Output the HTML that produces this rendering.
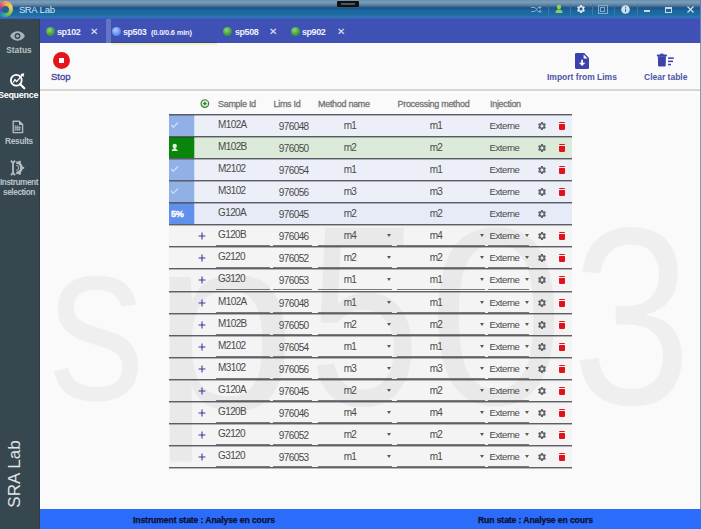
<!DOCTYPE html>
<html><head><meta charset="utf-8">
<style>
*{margin:0;padding:0;box-sizing:border-box}
html,body{width:701px;height:529px;overflow:hidden;background:#fafafa;font-family:"Liberation Sans",sans-serif;position:relative}
.abs{position:absolute}
#title{left:0;top:0;width:701px;height:19px;background:linear-gradient(to bottom,#6a8fae 0px,#7a9fbd 2px,#5f82a0 5px,#3d6a90 6.5px,#1c5284 8px,#1a64a0 10px,#1e6ea2 15px,#2a78bb 17px,#3a5fb5 18.5px,#3f51b5 19px)}
#side{left:0;top:19px;width:40px;height:510px;background:#37474f}
#tabs{left:40px;top:19px;width:661px;height:24px;background:#3f51b5}
#content{left:40px;top:43px;width:661px;height:466px;background:#fafafa;border-right:1px solid #7d9fae}
#statusbar{left:40px;top:509px;width:661px;height:20px;background:#2c6cfb}
.tab{position:absolute;color:#fff;font-weight:bold;white-space:nowrap}
.dot{position:absolute;width:9px;height:9px;border-radius:50%;top:27px}
.g{background:radial-gradient(circle at 40% 35%,#8ed77c 0,#4aa53f 50%,#2d7a2a 100%)}
.b{background:radial-gradient(circle at 40% 35%,#b5cdfb 0,#6c98ee 50%,#4a74d6 100%)}
.tt{position:absolute;top:27.3px;font-size:9px;line-height:10px;font-weight:bold;color:#eef0fb;white-space:nowrap;letter-spacing:-0.45px}
.x{position:absolute;top:26px;font-size:10px;line-height:12px;color:#e8eaf6}
.nav{position:absolute;left:0;width:40px;text-align:center;color:#bac4c8;font-weight:bold;font-size:8.3px;line-height:9px;white-space:nowrap}
.tool{position:absolute;color:#4a56a6;font-weight:bold;font-size:8.5px;line-height:10px;white-space:nowrap}
.wm{position:absolute;font-size:250px;line-height:250px;color:#efefef;white-space:nowrap;transform-origin:0 0;-webkit-text-stroke:1px #fafafa}
#table{position:absolute;left:170px;top:0;width:402px;height:529px}
.hd{position:absolute;top:99px;font-size:9px;line-height:10px;color:#757575;white-space:nowrap;letter-spacing:-0.3px;-webkit-text-stroke:0.3px #757575}
.row{position:absolute;left:-1px;width:403px;height:22px;border-top:1px solid rgba(30,30,38,.7);background:rgba(0,0,0,.025)}
.row>*{margin-left:1px;margin-top:1px}
.row::after{content:"";position:absolute;left:0;top:0;width:403px;height:1px;background:rgba(30,30,38,.3)}

.row.done{background:#eceff7}
.row.cur{background:#e6ebf7}
.row.green{background:#dcead9}
.row.last{height:24px;border-bottom:2px solid rgba(40,40,40,.72)}
.row>.st{position:absolute;left:0;top:0;width:26px;height:21px;margin-left:0;margin-top:0;border-right:1px solid rgba(255,255,255,.6)}
.st>svg{top:1px !important}
.stc{background:#91b0e6}
.stg{background:#0a850c}
.stp{background:#6090ec;color:#fff;font-weight:bold;font-size:9px;line-height:20px;padding-top:0.5px;padding-left:2px;letter-spacing:-0.3px;-webkit-text-stroke:0.35px #fff}
.plus{position:absolute;left:28.2px;top:5.9px}
.t{position:absolute;font-size:10px;line-height:10px;color:#4a4a4a;white-space:nowrap;letter-spacing:-0.6px}
.sid{left:48px;top:4px}
.lims{left:108.8px;top:6px}
.meth{left:160px;width:40px;text-align:center;top:5.2px}
.proc{left:246px;width:40px;text-align:center;top:5.2px}
.inj{left:319.5px;top:5.4px;font-size:9.6px;letter-spacing:-0.45px}
.ul{position:absolute;top:19px;height:1px;background:#7a7a7a}
.arr{position:absolute;top:8px;width:0;height:0;border-left:2.7px solid transparent;border-right:2.7px solid transparent;border-top:3px solid #5a5a5a}
.gear{position:absolute;left:366.5px;top:4.8px}
.trash{position:absolute;left:388.8px;top:7.5px;width:5.8px;height:6.5px;background:#e0131a;border-radius:0.5px 0.5px 1.2px 1.2px}
.trash i{position:absolute;left:-0.2px;top:-1.6px;width:6.2px;height:1.3px;background:#e0131a;border-radius:1px 1px 0 0}
.sb{position:absolute;top:515px;font-size:8.6px;line-height:10px;font-weight:bold;color:#081030;white-space:nowrap;letter-spacing:-0.1px;-webkit-text-stroke:0.25px #081030}
.ticon{position:absolute}
</style></head><body>
<div id="title" class="abs"></div>
<!-- logo -->
<div class="abs" style="left:-3px;top:1px;width:16px;height:16px;border-radius:50%;background:conic-gradient(from 0deg,#f0a050 0deg,#f2d060 70deg,#8cc840 130deg,#30a0a0 200deg,#3060c0 250deg,#d04080 300deg,#f0a050 360deg)"></div>
<div class="abs" style="left:1.5px;top:5.5px;width:7px;height:7px;border-radius:50%;background:#2a5f95"></div>
<div class="abs" style="left:19px;top:3.6px;font-size:9.5px;line-height:12px;color:#cfe4f6;letter-spacing:-0.5px">SRA</div><div class="abs" style="left:39.5px;top:3.6px;font-size:9.5px;line-height:12px;color:#cfe4f6;letter-spacing:-0.1px">Lab</div>
<div class="abs" style="left:337px;top:1px;width:22px;height:6px;background:#111;border-radius:1px"></div>
<div class="abs" style="left:341px;top:3px;width:14px;height:2px;background:#555"></div>
<!-- title icons -->
<svg class="ticon" style="left:531px;top:5px" width="11" height="9" viewBox="0 0 11 9"><path d="M0 2.5h4l3 4h3M0 6.5h4l3-4h3M8.5 1l1.5 1.5-1.5 1.5M8.5 5l1.5 1.5-1.5 1.5" stroke="#88a9c8" stroke-width="1" fill="none"/></svg>
<div class="abs" style="left:548px;top:4px;width:1px;height:11px;background:#3f77a8"></div>
<svg class="ticon" style="left:555px;top:4px" width="8" height="10" viewBox="0 0 8 10"><circle cx="4" cy="3" r="2.2" fill="#8fd14f"/><path d="M0.5 9c0-2.5 1.5-3.5 3.5-3.5S7.5 6.5 7.5 9z" fill="#8fd14f"/></svg>
<div class="abs" style="left:570px;top:4px;width:1px;height:11px;background:#3f77a8"></div>
<svg class="ticon" style="left:576px;top:4px" width="10" height="10" viewBox="0 0 24 24"><path fill="#dde8f3" d="M19.14 12.94c.04-.3.06-.61.06-.94 0-.32-.02-.64-.07-.94l2.03-1.58a.49.49 0 0 0 .12-.61l-1.92-3.32a.488.488 0 0 0-.59-.22l-2.39.96c-.5-.38-1.030-.7-1.62-.94l-.36-2.54a.484.484 0 0 0-.48-.41h-3.84c-.24 0-.43.17-.47.41l-.36 2.54c-.59.24-1.13.57-1.62.94l-2.39-.96a.48.48 0 0 0-.59.22L2.74 8.87c-.12.21-.8.47.12.61l2.03 1.58c-.05.3-.09.63-.09.94s.02.64.07.94l-2.03 1.58a.49.49 0 0 0-.12.61l1.920 3.32c.12.22.37.29.59.22l2.39-.96c.5.38 1.03.7 1.62.94l.36 2.54c.05.24.24.41.48.41h3.84c.24 0 .44-.17.47-.41l.36-2.540c.59-.24 1.13-.56 1.62-.94l2.39.96c.22.08.47 0 .59-.22l1.92-3.32c.12-.22.07-.47-.12-.61l-2.01-1.58zM12 15.6c-1.98 0-3.6-1.62-3.6-3.6s1.62-3.6 3.6-3.6 3.6 1.62 3.6 3.6-1.62 3.6-3.6 3.6z"/></svg>
<div class="abs" style="left:592px;top:4px;width:1px;height:11px;background:#3f77a8"></div>
<svg class="ticon" style="left:598px;top:5px" width="10" height="9" viewBox="0 0 10 9"><rect x="0.5" y="0.5" width="9" height="8" stroke="#88a9c8" fill="none"/><rect x="2.5" y="2.5" width="4" height="4" stroke="#88a9c8" fill="none"/></svg>
<div class="abs" style="left:614px;top:4px;width:1px;height:11px;background:#3f77a8"></div>
<svg class="ticon" style="left:621px;top:5px" width="9" height="9" viewBox="0 0 9 9"><circle cx="4.5" cy="4.5" r="4.3" fill="#cfe0f0"/><rect x="4" y="3.6" width="1.1" height="3.4" fill="#3b76ad"/><rect x="4" y="1.8" width="1.1" height="1.1" fill="#3b76ad"/></svg>
<div class="abs" style="left:637px;top:4px;width:1px;height:11px;background:#3f77a8"></div>
<div class="abs" style="left:643.5px;top:10.3px;width:6.5px;height:2px;background:#c5d9ec"></div>
<div class="abs" style="left:665px;top:6.5px;width:7px;height:6px;border:1px solid #c5d9ec;border-top-width:2px"></div>
<svg class="ticon" style="left:687px;top:6px" width="7" height="7" viewBox="0 0 7 7"><path d="M0.5 0.5L6.5 6.5M6.5 0.5L0.5 6.5" stroke="#cfe0f0" stroke-width="1.2"/></svg>

<div id="side" class="abs"></div>
<!-- sidebar -->
<svg class="abs" style="left:10px;top:31px" width="15" height="10" viewBox="0 0 15 10"><path d="M7.5 0.3C4 0.3 1.2 2.5 0.2 5c1 2.5 3.8 4.7 7.3 4.7s6.3-2.2 7.3-4.7C13.8 2.5 11 0.3 7.5 0.3z" fill="#a9b3b8"/><circle cx="7.5" cy="5" r="2.9" fill="#37474f"/><circle cx="7.5" cy="5" r="1.5" fill="#a9b3b8"/></svg>
<div class="nav" style="top:46px;left:-1px">Status</div>
<svg class="abs" style="left:8px;top:72px" width="18" height="18" viewBox="0 0 18 18"><circle cx="8.3" cy="8.3" r="5.4" stroke="#fff" stroke-width="1.8" fill="none"/><path d="M12.2 12.2L16.3 16.3" stroke="#fff" stroke-width="2.2" stroke-linecap="round"/><path d="M5.2 10.5L7 7.6 8.6 9.6 14.3 3" stroke="#fff" stroke-width="1.3" fill="none"/><path d="M16.3 1.2L12.4 2.1 15.5 5z" fill="#fff"/></svg>
<div class="nav" style="top:91px;color:#fff;font-size:9px;letter-spacing:-0.3px;left:-2px">Sequence</div>
<svg class="abs" style="left:12px;top:120px" width="12" height="14" viewBox="0 0 12 14"><path d="M1.2 1.2H7.2L10.6 4.6V12.6H1.2Z" stroke="#aebac0" stroke-width="1.4" fill="none" stroke-linejoin="round"/><path d="M7 1L10.8 4.8H7Z" fill="#c3cdd2"/><path d="M3.2 5.2V11M5.2 5.2V11M7.2 6V11M3.2 7.3H8.8M3.2 9.2H8.8" stroke="#aebac0" stroke-width="0.9"/></svg>
<div class="nav" style="top:137px;left:-1px;letter-spacing:-0.3px">Results</div>
<svg class="abs" style="left:10px;top:160px" width="15" height="16" viewBox="0 0 15 16"><path d="M1 0.6L3 3.2V12.6L1 15.2M5 0.6L3 3.2M3 12.6L5 15.2" stroke="#b4bfc4" stroke-width="1.8" fill="none"/><path d="M6.3 2.6A5.2 5.2 0 0 1 6.3 13" stroke="#b4bfc4" stroke-width="2.6" fill="none"/><path d="M6.3 5.4A2.4 2.4 0 0 1 6.3 10.2" stroke="#b4bfc4" stroke-width="1" fill="none"/><rect x="11.6" y="6.8" width="2.6" height="2" fill="#b4bfc4"/><rect x="8.6" y="0.9" width="2.2" height="2.4" fill="#b4bfc4" transform="rotate(30 9.7 2.1)"/><rect x="8.6" y="12.3" width="2.2" height="2.4" fill="#b4bfc4" transform="rotate(-30 9.7 13.5)"/></svg>
<div class="nav" style="top:178px;letter-spacing:-0.5px;left:-1px">Instrument</div>
<div class="nav" style="top:188px;letter-spacing:-0.45px;left:-1px">selection</div>
<div class="abs" style="left:-21px;top:465px;width:72px;height:18px;transform:rotate(-90deg);font-size:17px;line-height:18px;color:#e2e6e8;text-align:center;white-space:nowrap;letter-spacing:0.05px">SRA Lab</div>

<div id="tabs" class="abs"></div>
<div class="abs" style="left:700px;top:0px;width:1px;height:43px;background:#4f86c9"></div>
<div class="abs" style="left:38.5px;top:19px;width:1.5px;height:510px;background:#2d3b42"></div>
<!-- tabs -->
<div class="dot g" style="left:45.5px"></div>
<div class="tt" style="left:57px">sp102</div>
<div class="x" style="left:90px">&#x2715;</div>
<div class="abs" style="left:106px;top:19px;width:5px;height:24px;background:#6674c6"></div>
<div class="dot b" style="left:112px"></div>
<div class="tt" style="left:123px">sp503</div>
<div class="tt" style="left:151px;top:29px;font-size:7.5px;line-height:8px;letter-spacing:-0.2px">(0.0/0.6 min)</div>
<div class="dot g" style="left:223px"></div>
<div class="tt" style="left:235px">sp508</div>
<div class="x" style="left:269px">&#x2715;</div>
<div class="dot g" style="left:290.5px"></div>
<div class="tt" style="left:302px">sp902</div>
<div class="x" style="left:337px">&#x2715;</div>

<div id="content" class="abs"></div>
<div class="abs" style="left:111px;top:41.5px;width:106px;height:1.5px;background:#33418f"></div>
<div class="abs" style="left:111px;top:43px;width:106px;height:2px;background:#eef4c6"></div>
<div class="wm" style="left:48.1px;top:204.3px;transform:scale(0.78,0.93)">s</div>
<div class="wm" style="left:152px;top:196.9px;transform:scale(1.04,1.008)">p</div>
<div class="wm" style="left:307.9px;top:186.7px;transform:scale(0.81,1.034)">5</div>
<div class="wm" style="left:428.2px;top:190.4px;transform:scale(0.98,1.017)">0</div>
<div class="wm" style="left:571.3px;top:190.4px;transform:scale(0.87,1.017)">3</div>
<!-- toolbar -->
<div class="abs" style="left:53px;top:52px;width:17px;height:17px;border-radius:50%;background:#e4141b"></div>
<div class="abs" style="left:59px;top:58px;width:5px;height:5px;background:#fff;border-radius:0.5px"></div>
<div class="tool" style="left:51px;top:72px;font-weight:normal;font-size:9.5px;color:#433f9c;-webkit-text-stroke:0.3px #433f9c">Stop</div>
<svg class="abs" style="left:575px;top:53px" width="14" height="16" viewBox="0 0 14 16"><path d="M1.3 0h7.9l4.8 4.9v9.8a1.3 1.3 0 0 1-1.3 1.3H1.3A1.3 1.3 0 0 1 0 14.7V1.3A1.3 1.3 0 0 1 1.3 0z" fill="#3b43aa"/><path d="M8.6 1.6V5.6H12.6z" fill="#fff"/><path d="M6.2 6.8h1.8v3h2.3L7.1 13 3.9 9.8h2.3z" fill="#fff"/></svg>
<div class="tool" style="left:547px;top:72px">Import from Lims</div>
<svg class="abs" style="left:656px;top:53px" width="19" height="15" viewBox="0 0 19 15"><rect x="0.8" y="1.4" width="10.2" height="2" rx="1" fill="#3b43aa"/><rect x="4.4" y="0.6" width="3" height="1.4" fill="#3b43aa"/><path d="M1.9 3.2H9.9L9.7 12.8Q9.6 13.6 8.8 13.6H3Q2.2 13.6 2.1 12.8Z" fill="#3b43aa"/><rect x="12" y="4.4" width="5.8" height="1.5" fill="#3b43aa"/><rect x="12" y="7.6" width="5" height="1.5" fill="#3b43aa"/><rect x="12" y="10.8" width="3" height="1.5" fill="#3b43aa"/></svg>
<div class="tool" style="left:644px;top:72px">Clear table</div>
<div class="abs" style="left:40px;top:89px;width:660px;height:2px;background:#d6d6d6"></div><div class="abs" style="left:40px;top:91.5px;width:660px;height:1px;background:#fff"></div>

<div id="table">
<svg class="abs" style="left:30px;top:98.5px" width="10" height="10" viewBox="0 0 10 10"><circle cx="4.85" cy="4.55" r="3.8" stroke="#3d7f3f" stroke-width="1.2" fill="#d4f2d2"/><path d="M4.85 2.8v3.5M3.1 4.55h3.5" stroke="#2f7a33" stroke-width="1.3"/></svg>
<div class="hd" style="left:48px">Sample Id</div>
<div class="hd" style="left:103.5px">Lims Id</div>
<div class="hd" style="left:148px">Method name</div>
<div class="hd" style="left:227.5px">Processing method</div>
<div class="hd" style="left:320px">Injection</div>
<div class="row done" style="top:114px"><div class="st stc"><svg width="12" height="14" viewBox="0 0 12 14" style="position:absolute;left:0;top:0"><path d="M2.2 9 L4.3 11.4 L8.9 6.5" stroke="rgba(255,255,255,.6)" stroke-width="1.2" fill="none"/></svg></div><div class="t sid">M102A</div><div class="t lims">976048</div><div class="t meth">m1</div><div class="t proc">m1</div><div class="t inj">Externe</div><svg class="gear" width="10" height="10" viewBox="0 0 24 24"><path fill="#5f6368" d="M19.14 12.94c.04-.3.06-.61.06-.94 0-.32-.02-.64-.07-.94l2.03-1.58a.49.49 0 0 0 .12-.61l-1.92-3.32a.488.488 0 0 0-.59-.22l-2.39.96c-.5-.38-1.03-.7-1.62-.94l-.36-2.54a.484.484 0 0 0-.48-.41h-3.84c-.24 0-.43.17-.47.41l-.36 2.54c-.59.24-1.13.57-1.62.94l-2.39-.96a.48.48 0 0 0-.59.22L2.74 8.87c-.12.21-.8.47.12.61l2.03 1.58c-.05.3-.09.63-.09.94s.02.64.07.94l-2.03 1.58a.49.49 0 0 0-.12.61l1.92 3.32c.12.22.37.29.59.22l2.39-.96c.5.38 1.03.7 1.62.94l.36 2.54c.05.24.24.41.48.41h3.84c.24 0 .44-.17.47-.41l.36-2.54c.59-.24 1.13-.56 1.62-.94l2.39.96c.22.08.47 0 .59-.22l1.92-3.32c.12-.22.07-.47-.12-.61l-2.01-1.58zM12 15.6c-1.98 0-3.6-1.62-3.6-3.6s1.62-3.6 3.6-3.6 3.6 1.62 3.6 3.6-1.62 3.6-3.6 3.6z"/></svg><div class="trash"><i></i></div></div>
<div class="row green" style="top:136px"><div class="st stg"><svg width="12" height="16" viewBox="0 0 12 16" style="position:absolute;left:0;top:0"><circle cx="5.7" cy="7.9" r="2.2" fill="#d8f3d8"/><path d="M4.9 9.5h1.6l0.6 2h-2.8z M2.6 13 L3.4 11.3 H8 L8.8 13 Z" fill="#d8f3d8"/></svg></div><div class="t sid">M102B</div><div class="t lims">976050</div><div class="t meth">m2</div><div class="t proc">m2</div><div class="t inj">Externe</div><svg class="gear" width="10" height="10" viewBox="0 0 24 24"><path fill="#5f6368" d="M19.14 12.94c.04-.3.06-.61.06-.94 0-.32-.02-.64-.07-.94l2.03-1.58a.49.49 0 0 0 .12-.61l-1.92-3.32a.488.488 0 0 0-.59-.22l-2.39.96c-.5-.38-1.03-.7-1.62-.94l-.36-2.54a.484.484 0 0 0-.48-.41h-3.84c-.24 0-.43.17-.47.41l-.36 2.54c-.59.24-1.13.57-1.62.94l-2.39-.96a.48.48 0 0 0-.59.22L2.74 8.87c-.12.21-.8.47.12.61l2.03 1.58c-.05.3-.09.63-.09.94s.02.64.07.94l-2.03 1.58a.49.49 0 0 0-.12.61l1.92 3.32c.12.22.37.29.59.22l2.39-.96c.5.38 1.03.7 1.62.94l.36 2.54c.05.24.24.41.48.41h3.84c.24 0 .44-.17.47-.41l.36-2.54c.59-.24 1.13-.56 1.62-.94l2.39.96c.22.08.47 0 .59-.22l1.92-3.32c.12-.22.07-.47-.12-.61l-2.01-1.58zM12 15.6c-1.98 0-3.6-1.62-3.6-3.6s1.62-3.6 3.6-3.6 3.6 1.62 3.6 3.6-1.62 3.6-3.6 3.6z"/></svg><div class="trash"><i></i></div></div>
<div class="row done" style="top:158px"><div class="st stc"><svg width="12" height="14" viewBox="0 0 12 14" style="position:absolute;left:0;top:0"><path d="M2.2 9 L4.3 11.4 L8.9 6.5" stroke="rgba(255,255,255,.6)" stroke-width="1.2" fill="none"/></svg></div><div class="t sid">M2102</div><div class="t lims">976054</div><div class="t meth">m1</div><div class="t proc">m1</div><div class="t inj">Externe</div><svg class="gear" width="10" height="10" viewBox="0 0 24 24"><path fill="#5f6368" d="M19.14 12.94c.04-.3.06-.61.06-.94 0-.32-.02-.64-.07-.94l2.03-1.58a.49.49 0 0 0 .12-.61l-1.92-3.32a.488.488 0 0 0-.59-.22l-2.39.96c-.5-.38-1.03-.7-1.62-.94l-.36-2.54a.484.484 0 0 0-.48-.41h-3.84c-.24 0-.43.17-.47.41l-.36 2.54c-.59.24-1.13.57-1.62.94l-2.39-.96a.48.48 0 0 0-.59.22L2.74 8.87c-.12.21-.8.47.12.61l2.03 1.58c-.05.3-.09.63-.09.94s.02.64.07.94l-2.03 1.58a.49.49 0 0 0-.12.61l1.92 3.32c.12.22.37.29.59.22l2.39-.96c.5.38 1.03.7 1.62.94l.36 2.54c.05.24.24.41.48.41h3.84c.24 0 .44-.17.47-.41l.36-2.54c.59-.24 1.13-.56 1.62-.94l2.39.96c.22.08.47 0 .59-.22l1.92-3.32c.12-.22.07-.47-.12-.61l-2.01-1.58zM12 15.6c-1.98 0-3.6-1.62-3.6-3.6s1.62-3.6 3.6-3.6 3.6 1.62 3.6 3.6-1.62 3.6-3.6 3.6z"/></svg><div class="trash"><i></i></div></div>
<div class="row done" style="top:180px"><div class="st stc"><svg width="12" height="14" viewBox="0 0 12 14" style="position:absolute;left:0;top:0"><path d="M2.2 9 L4.3 11.4 L8.9 6.5" stroke="rgba(255,255,255,.6)" stroke-width="1.2" fill="none"/></svg></div><div class="t sid">M3102</div><div class="t lims">976056</div><div class="t meth">m3</div><div class="t proc">m3</div><div class="t inj">Externe</div><svg class="gear" width="10" height="10" viewBox="0 0 24 24"><path fill="#5f6368" d="M19.14 12.94c.04-.3.06-.61.06-.94 0-.32-.02-.64-.07-.94l2.03-1.58a.49.49 0 0 0 .12-.61l-1.92-3.32a.488.488 0 0 0-.59-.22l-2.39.96c-.5-.38-1.03-.7-1.62-.94l-.36-2.54a.484.484 0 0 0-.48-.41h-3.84c-.24 0-.43.17-.47.41l-.36 2.54c-.59.24-1.13.57-1.62.94l-2.39-.96a.48.48 0 0 0-.59.22L2.74 8.87c-.12.21-.8.47.12.61l2.03 1.58c-.05.3-.09.63-.09.94s.02.64.07.94l-2.03 1.58a.49.49 0 0 0-.12.61l1.92 3.32c.12.22.37.29.59.22l2.39-.96c.5.38 1.03.7 1.62.94l.36 2.54c.05.24.24.41.48.41h3.84c.24 0 .44-.17.47-.41l.36-2.54c.59-.24 1.13-.56 1.62-.94l2.39.96c.22.08.47 0 .59-.22l1.92-3.32c.12-.22.07-.47-.12-.61l-2.01-1.58zM12 15.6c-1.98 0-3.6-1.62-3.6-3.6s1.62-3.6 3.6-3.6 3.6 1.62 3.6 3.6-1.62 3.6-3.6 3.6z"/></svg><div class="trash"><i></i></div></div>
<div class="row cur" style="top:202px"><div class="st stp">5%</div><div class="t sid">G120A</div><div class="t lims">976045</div><div class="t meth">m2</div><div class="t proc">m2</div><div class="t inj">Externe</div><svg class="gear" width="10" height="10" viewBox="0 0 24 24"><path fill="#5f6368" d="M19.14 12.94c.04-.3.06-.61.06-.94 0-.32-.02-.64-.07-.94l2.03-1.58a.49.49 0 0 0 .12-.61l-1.92-3.32a.488.488 0 0 0-.59-.22l-2.39.96c-.5-.38-1.03-.7-1.62-.94l-.36-2.54a.484.484 0 0 0-.48-.41h-3.84c-.24 0-.43.17-.47.41l-.36 2.54c-.59.24-1.13.57-1.62.94l-2.39-.96a.48.48 0 0 0-.59.22L2.74 8.87c-.12.21-.8.47.12.61l2.03 1.58c-.05.3-.09.63-.09.94s.02.64.07.94l-2.03 1.58a.49.49 0 0 0-.12.61l1.92 3.32c.12.22.37.29.59.22l2.39-.96c.5.38 1.03.7 1.62.94l.36 2.54c.05.24.24.41.48.41h3.84c.24 0 .44-.17.47-.41l.36-2.54c.59-.24 1.13-.56 1.62-.94l2.39.96c.22.08.47 0 .59-.22l1.92-3.32c.12-.22.07-.47-.12-.61l-2.01-1.58zM12 15.6c-1.98 0-3.6-1.62-3.6-3.6s1.62-3.6 3.6-3.6 3.6 1.62 3.6 3.6-1.62 3.6-3.6 3.6z"/></svg></div>
<div class="row edit" style="top:224px"><svg class="plus" width="8" height="8" viewBox="0 0 8 8"><path d="M4 0.6V7.4M0.6 4H7.4" stroke="#3b3b94" stroke-width="1.1"/></svg><div class="t sid">G120B</div><div class="ul" style="left:46px;width:54px"></div><div class="t lims">976046</div><div class="ul" style="left:103px;width:39px"></div><div class="t meth">m4</div><div class="ul" style="left:148px;width:74px"></div><div class="arr" style="left:217px"></div><div class="t proc">m4</div><div class="ul" style="left:227px;width:88px"></div><div class="arr" style="left:310px"></div><div class="t inj">Externe</div><div class="ul" style="left:318px;width:41px"></div><div class="arr" style="left:355px"></div><svg class="gear" width="10" height="10" viewBox="0 0 24 24"><path fill="#5f6368" d="M19.14 12.94c.04-.3.06-.61.06-.94 0-.32-.02-.64-.07-.94l2.03-1.58a.49.49 0 0 0 .12-.61l-1.92-3.32a.488.488 0 0 0-.59-.22l-2.39.96c-.5-.38-1.03-.7-1.62-.94l-.36-2.54a.484.484 0 0 0-.48-.41h-3.84c-.24 0-.43.17-.47.41l-.36 2.54c-.59.24-1.13.57-1.62.94l-2.39-.96a.48.48 0 0 0-.59.22L2.74 8.87c-.12.21-.8.47.12.61l2.03 1.58c-.05.3-.09.63-.09.94s.02.64.07.94l-2.03 1.58a.49.49 0 0 0-.12.61l1.92 3.32c.12.22.37.29.59.22l2.39-.96c.5.38 1.03.7 1.62.94l.36 2.54c.05.24.24.41.48.41h3.84c.24 0 .44-.17.47-.41l.36-2.54c.59-.24 1.13-.56 1.62-.94l2.39.96c.22.08.47 0 .59-.22l1.92-3.32c.12-.22.07-.47-.12-.61l-2.01-1.58zM12 15.6c-1.98 0-3.6-1.62-3.6-3.6s1.62-3.6 3.6-3.6 3.6 1.62 3.6 3.6-1.62 3.6-3.6 3.6z"/></svg><div class="trash"><i></i></div></div>
<div class="row edit" style="top:246px"><svg class="plus" width="8" height="8" viewBox="0 0 8 8"><path d="M4 0.6V7.4M0.6 4H7.4" stroke="#3b3b94" stroke-width="1.1"/></svg><div class="t sid">G2120</div><div class="ul" style="left:46px;width:54px"></div><div class="t lims">976052</div><div class="ul" style="left:103px;width:39px"></div><div class="t meth">m2</div><div class="ul" style="left:148px;width:74px"></div><div class="arr" style="left:217px"></div><div class="t proc">m2</div><div class="ul" style="left:227px;width:88px"></div><div class="arr" style="left:310px"></div><div class="t inj">Externe</div><div class="ul" style="left:318px;width:41px"></div><div class="arr" style="left:355px"></div><svg class="gear" width="10" height="10" viewBox="0 0 24 24"><path fill="#5f6368" d="M19.14 12.94c.04-.3.06-.61.06-.94 0-.32-.02-.64-.07-.94l2.03-1.58a.49.49 0 0 0 .12-.61l-1.92-3.32a.488.488 0 0 0-.59-.22l-2.39.96c-.5-.38-1.03-.7-1.62-.94l-.36-2.54a.484.484 0 0 0-.48-.41h-3.84c-.24 0-.43.17-.47.41l-.36 2.54c-.59.24-1.13.57-1.62.94l-2.39-.96a.48.48 0 0 0-.59.22L2.74 8.87c-.12.21-.8.47.12.61l2.03 1.58c-.05.3-.09.63-.09.94s.02.64.07.94l-2.03 1.58a.49.49 0 0 0-.12.61l1.92 3.32c.12.22.37.29.59.22l2.39-.96c.5.38 1.03.7 1.62.94l.36 2.54c.05.24.24.41.48.41h3.84c.24 0 .44-.17.47-.41l.36-2.54c.59-.24 1.13-.56 1.62-.94l2.39.96c.22.08.47 0 .59-.22l1.92-3.32c.12-.22.07-.47-.12-.61l-2.01-1.58zM12 15.6c-1.98 0-3.6-1.62-3.6-3.6s1.62-3.6 3.6-3.6 3.6 1.62 3.6 3.6-1.62 3.6-3.6 3.6z"/></svg><div class="trash"><i></i></div></div>
<div class="row edit" style="top:268px"><svg class="plus" width="8" height="8" viewBox="0 0 8 8"><path d="M4 0.6V7.4M0.6 4H7.4" stroke="#3b3b94" stroke-width="1.1"/></svg><div class="t sid">G3120</div><div class="ul" style="left:46px;width:54px"></div><div class="t lims">976053</div><div class="ul" style="left:103px;width:39px"></div><div class="t meth">m1</div><div class="ul" style="left:148px;width:74px"></div><div class="arr" style="left:217px"></div><div class="t proc">m1</div><div class="ul" style="left:227px;width:88px"></div><div class="arr" style="left:310px"></div><div class="t inj">Externe</div><div class="ul" style="left:318px;width:41px"></div><div class="arr" style="left:355px"></div><svg class="gear" width="10" height="10" viewBox="0 0 24 24"><path fill="#5f6368" d="M19.14 12.94c.04-.3.06-.61.06-.94 0-.32-.02-.64-.07-.94l2.03-1.58a.49.49 0 0 0 .12-.61l-1.92-3.32a.488.488 0 0 0-.59-.22l-2.39.96c-.5-.38-1.03-.7-1.62-.94l-.36-2.54a.484.484 0 0 0-.48-.41h-3.84c-.24 0-.43.17-.47.41l-.36 2.54c-.59.24-1.13.57-1.62.94l-2.39-.96a.48.48 0 0 0-.59.22L2.74 8.87c-.12.21-.8.47.12.61l2.03 1.58c-.05.3-.09.63-.09.94s.02.64.07.94l-2.03 1.58a.49.49 0 0 0-.12.61l1.92 3.32c.12.22.37.29.59.22l2.39-.96c.5.38 1.03.7 1.62.94l.36 2.54c.05.24.24.41.48.41h3.84c.24 0 .44-.17.47-.41l.36-2.54c.59-.24 1.13-.56 1.62-.94l2.39.96c.22.08.47 0 .59-.22l1.92-3.32c.12-.22.07-.47-.12-.61l-2.01-1.58zM12 15.6c-1.98 0-3.6-1.62-3.6-3.6s1.62-3.6 3.6-3.6 3.6 1.62 3.6 3.6-1.62 3.6-3.6 3.6z"/></svg><div class="trash"><i></i></div></div>
<div class="row edit" style="top:291px"><svg class="plus" width="8" height="8" viewBox="0 0 8 8"><path d="M4 0.6V7.4M0.6 4H7.4" stroke="#3b3b94" stroke-width="1.1"/></svg><div class="t sid">M102A</div><div class="ul" style="left:46px;width:54px"></div><div class="t lims">976048</div><div class="ul" style="left:103px;width:39px"></div><div class="t meth">m1</div><div class="ul" style="left:148px;width:74px"></div><div class="arr" style="left:217px"></div><div class="t proc">m1</div><div class="ul" style="left:227px;width:88px"></div><div class="arr" style="left:310px"></div><div class="t inj">Externe</div><div class="ul" style="left:318px;width:41px"></div><div class="arr" style="left:355px"></div><svg class="gear" width="10" height="10" viewBox="0 0 24 24"><path fill="#5f6368" d="M19.14 12.94c.04-.3.06-.61.06-.94 0-.32-.02-.64-.07-.94l2.03-1.58a.49.49 0 0 0 .12-.61l-1.92-3.32a.488.488 0 0 0-.59-.22l-2.39.96c-.5-.38-1.03-.7-1.62-.94l-.36-2.54a.484.484 0 0 0-.48-.41h-3.84c-.24 0-.43.17-.47.41l-.36 2.54c-.59.24-1.13.57-1.62.94l-2.39-.96a.48.48 0 0 0-.59.22L2.74 8.87c-.12.21-.8.47.12.61l2.03 1.58c-.05.3-.09.63-.09.94s.02.64.07.94l-2.03 1.58a.49.49 0 0 0-.12.61l1.92 3.32c.12.22.37.29.59.22l2.39-.96c.5.38 1.03.7 1.62.94l.36 2.54c.05.24.24.41.48.41h3.84c.24 0 .44-.17.47-.41l.36-2.54c.59-.24 1.13-.56 1.62-.94l2.39.96c.22.08.47 0 .59-.22l1.92-3.32c.12-.22.07-.47-.12-.61l-2.01-1.58zM12 15.6c-1.98 0-3.6-1.62-3.6-3.6s1.62-3.6 3.6-3.6 3.6 1.62 3.6 3.6-1.62 3.6-3.6 3.6z"/></svg><div class="trash"><i></i></div></div>
<div class="row edit" style="top:313px"><svg class="plus" width="8" height="8" viewBox="0 0 8 8"><path d="M4 0.6V7.4M0.6 4H7.4" stroke="#3b3b94" stroke-width="1.1"/></svg><div class="t sid">M102B</div><div class="ul" style="left:46px;width:54px"></div><div class="t lims">976050</div><div class="ul" style="left:103px;width:39px"></div><div class="t meth">m2</div><div class="ul" style="left:148px;width:74px"></div><div class="arr" style="left:217px"></div><div class="t proc">m2</div><div class="ul" style="left:227px;width:88px"></div><div class="arr" style="left:310px"></div><div class="t inj">Externe</div><div class="ul" style="left:318px;width:41px"></div><div class="arr" style="left:355px"></div><svg class="gear" width="10" height="10" viewBox="0 0 24 24"><path fill="#5f6368" d="M19.14 12.94c.04-.3.06-.61.06-.94 0-.32-.02-.64-.07-.94l2.03-1.58a.49.49 0 0 0 .12-.61l-1.92-3.32a.488.488 0 0 0-.59-.22l-2.39.96c-.5-.38-1.03-.7-1.62-.94l-.36-2.54a.484.484 0 0 0-.48-.41h-3.84c-.24 0-.43.17-.47.41l-.36 2.54c-.59.24-1.13.57-1.62.94l-2.39-.96a.48.48 0 0 0-.59.22L2.74 8.87c-.12.21-.8.47.12.61l2.03 1.58c-.05.3-.09.63-.09.94s.02.64.07.94l-2.03 1.58a.49.49 0 0 0-.12.61l1.92 3.32c.12.22.37.29.59.22l2.39-.96c.5.38 1.03.7 1.62.94l.36 2.54c.05.24.24.41.48.41h3.84c.24 0 .44-.17.47-.41l.36-2.54c.59-.24 1.13-.56 1.62-.94l2.39.96c.22.08.47 0 .59-.22l1.92-3.32c.12-.22.07-.47-.12-.61l-2.01-1.58zM12 15.6c-1.98 0-3.6-1.62-3.6-3.6s1.62-3.6 3.6-3.6 3.6 1.62 3.6 3.6-1.62 3.6-3.6 3.6z"/></svg><div class="trash"><i></i></div></div>
<div class="row edit" style="top:335px"><svg class="plus" width="8" height="8" viewBox="0 0 8 8"><path d="M4 0.6V7.4M0.6 4H7.4" stroke="#3b3b94" stroke-width="1.1"/></svg><div class="t sid">M2102</div><div class="ul" style="left:46px;width:54px"></div><div class="t lims">976054</div><div class="ul" style="left:103px;width:39px"></div><div class="t meth">m1</div><div class="ul" style="left:148px;width:74px"></div><div class="arr" style="left:217px"></div><div class="t proc">m1</div><div class="ul" style="left:227px;width:88px"></div><div class="arr" style="left:310px"></div><div class="t inj">Externe</div><div class="ul" style="left:318px;width:41px"></div><div class="arr" style="left:355px"></div><svg class="gear" width="10" height="10" viewBox="0 0 24 24"><path fill="#5f6368" d="M19.14 12.94c.04-.3.06-.61.06-.94 0-.32-.02-.64-.07-.94l2.03-1.58a.49.49 0 0 0 .12-.61l-1.92-3.32a.488.488 0 0 0-.59-.22l-2.39.96c-.5-.38-1.03-.7-1.62-.94l-.36-2.54a.484.484 0 0 0-.48-.41h-3.84c-.24 0-.43.17-.47.41l-.36 2.54c-.59.24-1.13.57-1.62.94l-2.39-.96a.48.48 0 0 0-.59.22L2.74 8.87c-.12.21-.8.47.12.61l2.03 1.58c-.05.3-.09.63-.09.94s.02.64.07.94l-2.03 1.58a.49.49 0 0 0-.12.61l1.92 3.32c.12.22.37.29.59.22l2.39-.96c.5.38 1.03.7 1.62.94l.36 2.54c.05.24.24.41.48.41h3.84c.24 0 .44-.17.47-.41l.36-2.54c.59-.24 1.13-.56 1.62-.94l2.39.96c.22.08.47 0 .59-.22l1.92-3.32c.12-.22.07-.47-.12-.61l-2.01-1.58zM12 15.6c-1.98 0-3.6-1.62-3.6-3.6s1.62-3.6 3.6-3.6 3.6 1.62 3.6 3.6-1.62 3.6-3.6 3.6z"/></svg><div class="trash"><i></i></div></div>
<div class="row edit" style="top:357px"><svg class="plus" width="8" height="8" viewBox="0 0 8 8"><path d="M4 0.6V7.4M0.6 4H7.4" stroke="#3b3b94" stroke-width="1.1"/></svg><div class="t sid">M3102</div><div class="ul" style="left:46px;width:54px"></div><div class="t lims">976056</div><div class="ul" style="left:103px;width:39px"></div><div class="t meth">m3</div><div class="ul" style="left:148px;width:74px"></div><div class="arr" style="left:217px"></div><div class="t proc">m3</div><div class="ul" style="left:227px;width:88px"></div><div class="arr" style="left:310px"></div><div class="t inj">Externe</div><div class="ul" style="left:318px;width:41px"></div><div class="arr" style="left:355px"></div><svg class="gear" width="10" height="10" viewBox="0 0 24 24"><path fill="#5f6368" d="M19.14 12.94c.04-.3.06-.61.06-.94 0-.32-.02-.64-.07-.94l2.03-1.58a.49.49 0 0 0 .12-.61l-1.92-3.32a.488.488 0 0 0-.59-.22l-2.39.96c-.5-.38-1.03-.7-1.62-.94l-.36-2.54a.484.484 0 0 0-.48-.41h-3.84c-.24 0-.43.17-.47.41l-.36 2.54c-.59.24-1.13.57-1.62.94l-2.39-.96a.48.48 0 0 0-.59.22L2.74 8.87c-.12.21-.8.47.12.61l2.03 1.58c-.05.3-.09.63-.09.94s.02.64.07.94l-2.03 1.58a.49.49 0 0 0-.12.61l1.92 3.32c.12.22.37.29.59.22l2.39-.96c.5.38 1.03.7 1.62.94l.36 2.54c.05.24.24.41.48.41h3.84c.24 0 .44-.17.47-.41l.36-2.54c.59-.24 1.13-.56 1.62-.94l2.39.96c.22.08.47 0 .59-.22l1.92-3.32c.12-.22.07-.47-.12-.61l-2.01-1.58zM12 15.6c-1.98 0-3.6-1.62-3.6-3.6s1.62-3.6 3.6-3.6 3.6 1.62 3.6 3.6-1.62 3.6-3.6 3.6z"/></svg><div class="trash"><i></i></div></div>
<div class="row edit" style="top:379px"><svg class="plus" width="8" height="8" viewBox="0 0 8 8"><path d="M4 0.6V7.4M0.6 4H7.4" stroke="#3b3b94" stroke-width="1.1"/></svg><div class="t sid">G120A</div><div class="ul" style="left:46px;width:54px"></div><div class="t lims">976045</div><div class="ul" style="left:103px;width:39px"></div><div class="t meth">m2</div><div class="ul" style="left:148px;width:74px"></div><div class="arr" style="left:217px"></div><div class="t proc">m2</div><div class="ul" style="left:227px;width:88px"></div><div class="arr" style="left:310px"></div><div class="t inj">Externe</div><div class="ul" style="left:318px;width:41px"></div><div class="arr" style="left:355px"></div><svg class="gear" width="10" height="10" viewBox="0 0 24 24"><path fill="#5f6368" d="M19.14 12.94c.04-.3.06-.61.06-.94 0-.32-.02-.64-.07-.94l2.03-1.58a.49.49 0 0 0 .12-.61l-1.92-3.32a.488.488 0 0 0-.59-.22l-2.39.96c-.5-.38-1.03-.7-1.62-.94l-.36-2.54a.484.484 0 0 0-.48-.41h-3.84c-.24 0-.43.17-.47.41l-.36 2.54c-.59.24-1.13.57-1.62.94l-2.39-.96a.48.48 0 0 0-.59.22L2.74 8.87c-.12.21-.8.47.12.61l2.03 1.58c-.05.3-.09.63-.09.94s.02.64.07.94l-2.03 1.58a.49.49 0 0 0-.12.61l1.92 3.32c.12.22.37.29.59.22l2.39-.96c.5.38 1.03.7 1.62.94l.36 2.54c.05.24.24.41.48.41h3.84c.24 0 .44-.17.47-.41l.36-2.54c.59-.24 1.13-.56 1.62-.94l2.39.96c.22.08.47 0 .59-.22l1.92-3.32c.12-.22.07-.47-.12-.61l-2.01-1.58zM12 15.6c-1.98 0-3.6-1.62-3.6-3.6s1.62-3.6 3.6-3.6 3.6 1.62 3.6 3.6-1.62 3.6-3.6 3.6z"/></svg><div class="trash"><i></i></div></div>
<div class="row edit" style="top:401px"><svg class="plus" width="8" height="8" viewBox="0 0 8 8"><path d="M4 0.6V7.4M0.6 4H7.4" stroke="#3b3b94" stroke-width="1.1"/></svg><div class="t sid">G120B</div><div class="ul" style="left:46px;width:54px"></div><div class="t lims">976046</div><div class="ul" style="left:103px;width:39px"></div><div class="t meth">m4</div><div class="ul" style="left:148px;width:74px"></div><div class="arr" style="left:217px"></div><div class="t proc">m4</div><div class="ul" style="left:227px;width:88px"></div><div class="arr" style="left:310px"></div><div class="t inj">Externe</div><div class="ul" style="left:318px;width:41px"></div><div class="arr" style="left:355px"></div><svg class="gear" width="10" height="10" viewBox="0 0 24 24"><path fill="#5f6368" d="M19.14 12.94c.04-.3.06-.61.06-.94 0-.32-.02-.64-.07-.94l2.03-1.58a.49.49 0 0 0 .12-.61l-1.92-3.32a.488.488 0 0 0-.59-.22l-2.39.96c-.5-.38-1.03-.7-1.62-.94l-.36-2.54a.484.484 0 0 0-.48-.41h-3.84c-.24 0-.43.17-.47.41l-.36 2.54c-.59.24-1.13.57-1.62.94l-2.39-.96a.48.48 0 0 0-.59.22L2.74 8.87c-.12.21-.8.47.12.61l2.03 1.58c-.05.3-.09.63-.09.94s.02.64.07.94l-2.03 1.58a.49.49 0 0 0-.12.61l1.92 3.32c.12.22.37.29.59.22l2.39-.96c.5.38 1.03.7 1.62.94l.36 2.54c.05.24.24.41.48.41h3.84c.24 0 .44-.17.47-.41l.36-2.54c.59-.24 1.13-.56 1.62-.94l2.39.96c.22.08.47 0 .59-.22l1.92-3.32c.12-.22.07-.47-.12-.61l-2.01-1.58zM12 15.6c-1.98 0-3.6-1.62-3.6-3.6s1.62-3.6 3.6-3.6 3.6 1.62 3.6 3.6-1.62 3.6-3.6 3.6z"/></svg><div class="trash"><i></i></div></div>
<div class="row edit" style="top:423px"><svg class="plus" width="8" height="8" viewBox="0 0 8 8"><path d="M4 0.6V7.4M0.6 4H7.4" stroke="#3b3b94" stroke-width="1.1"/></svg><div class="t sid">G2120</div><div class="ul" style="left:46px;width:54px"></div><div class="t lims">976052</div><div class="ul" style="left:103px;width:39px"></div><div class="t meth">m2</div><div class="ul" style="left:148px;width:74px"></div><div class="arr" style="left:217px"></div><div class="t proc">m2</div><div class="ul" style="left:227px;width:88px"></div><div class="arr" style="left:310px"></div><div class="t inj">Externe</div><div class="ul" style="left:318px;width:41px"></div><div class="arr" style="left:355px"></div><svg class="gear" width="10" height="10" viewBox="0 0 24 24"><path fill="#5f6368" d="M19.14 12.94c.04-.3.06-.61.06-.94 0-.32-.02-.64-.07-.94l2.03-1.58a.49.49 0 0 0 .12-.61l-1.92-3.32a.488.488 0 0 0-.59-.22l-2.39.96c-.5-.38-1.03-.7-1.62-.94l-.36-2.54a.484.484 0 0 0-.48-.41h-3.84c-.24 0-.43.17-.47.41l-.36 2.54c-.59.24-1.13.57-1.62.94l-2.39-.96a.48.48 0 0 0-.59.22L2.74 8.87c-.12.21-.8.47.12.61l2.03 1.58c-.05.3-.09.63-.09.94s.02.64.07.94l-2.03 1.58a.49.49 0 0 0-.12.61l1.92 3.32c.12.22.37.29.59.22l2.39-.96c.5.38 1.03.7 1.62.94l.36 2.54c.05.24.24.41.48.41h3.84c.24 0 .44-.17.47-.41l.36-2.54c.59-.24 1.13-.56 1.62-.94l2.39.96c.22.08.47 0 .59-.22l1.92-3.32c.12-.22.07-.47-.12-.61l-2.01-1.58zM12 15.6c-1.98 0-3.6-1.62-3.6-3.6s1.62-3.6 3.6-3.6 3.6 1.62 3.6 3.6-1.62 3.6-3.6 3.6z"/></svg><div class="trash"><i></i></div></div>
<div class="row edit" style="top:445px"><svg class="plus" width="8" height="8" viewBox="0 0 8 8"><path d="M4 0.6V7.4M0.6 4H7.4" stroke="#3b3b94" stroke-width="1.1"/></svg><div class="t sid">G3120</div><div class="ul" style="left:46px;width:54px"></div><div class="t lims">976053</div><div class="ul" style="left:103px;width:39px"></div><div class="t meth">m1</div><div class="ul" style="left:148px;width:74px"></div><div class="arr" style="left:217px"></div><div class="t proc">m1</div><div class="ul" style="left:227px;width:88px"></div><div class="arr" style="left:310px"></div><div class="t inj">Externe</div><div class="ul" style="left:318px;width:41px"></div><div class="arr" style="left:355px"></div><svg class="gear" width="10" height="10" viewBox="0 0 24 24"><path fill="#5f6368" d="M19.14 12.94c.04-.3.06-.61.06-.94 0-.32-.02-.64-.07-.94l2.03-1.58a.49.49 0 0 0 .12-.61l-1.92-3.32a.488.488 0 0 0-.59-.22l-2.39.96c-.5-.38-1.03-.7-1.62-.94l-.36-2.54a.484.484 0 0 0-.48-.41h-3.84c-.24 0-.43.17-.47.41l-.36 2.54c-.59.24-1.13.57-1.62.94l-2.39-.96a.48.48 0 0 0-.59.22L2.74 8.87c-.12.21-.8.47.12.61l2.03 1.58c-.05.3-.09.63-.09.94s.02.64.07.94l-2.03 1.58a.49.49 0 0 0-.12.61l1.92 3.32c.12.22.37.29.59.22l2.39-.96c.5.38 1.03.7 1.62.94l.36 2.54c.05.24.24.41.48.41h3.84c.24 0 .44-.17.47-.41l.36-2.54c.59-.24 1.13-.56 1.62-.94l2.39.96c.22.08.47 0 .59-.22l1.92-3.32c.12-.22.07-.47-.12-.61l-2.01-1.58zM12 15.6c-1.98 0-3.6-1.62-3.6-3.6s1.62-3.6 3.6-3.6 3.6 1.62 3.6 3.6-1.62 3.6-3.6 3.6z"/></svg><div class="trash"><i></i></div></div>
<div class="abs" style="left:-1px;top:467px;width:403px;height:1px;background:rgba(30,30,38,.7)"></div><div class="abs" style="left:-1px;top:468px;width:403px;height:1px;background:rgba(30,30,38,.3)"></div>
</div>

<div id="statusbar" class="abs"></div>
<div class="sb" style="left:133px">Instrument state : Analyse en cours</div>
<div class="sb" style="left:478px">Run state : Analyse en cours</div>
</body></html>
